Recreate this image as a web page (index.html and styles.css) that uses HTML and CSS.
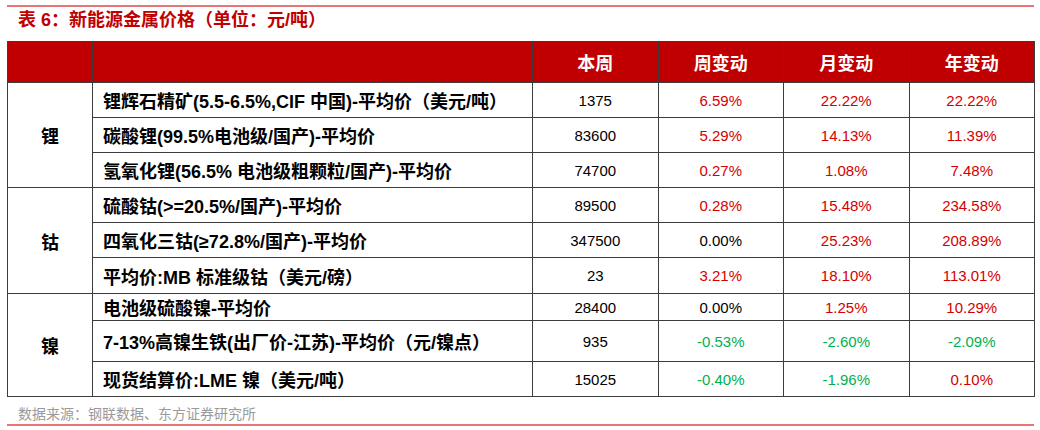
FILE: index.html
```html
<!DOCTYPE html>
<html lang="zh-CN">
<head>
<meta charset="utf-8">
<title>新能源金属价格</title>
<link rel="stylesheet" href="styles.css">
</head>
<body>
<div class="page">
  <div class="rule"></div>
  <div class="title">表 6：新能源金属价格（单位：元/吨）</div>
  <table class="tbl">
    <colgroup>
      <col class="c-metal"><col class="c-name"><col class="c-num"><col class="c-num"><col class="c-num"><col class="c-num">
    </colgroup>
    <thead>
      <tr class="h41"><th></th><th></th><th>本周</th><th>周变动</th><th>月变动</th><th>年变动</th></tr>
    </thead>
    <tbody>
      <tr class="h35"><td class="metal" rowspan="3">锂</td><td class="name">锂辉石精矿(5.5-6.5%,CIF 中国)-平均价（美元/吨）</td><td>1375</td><td class="up">6.59%</td><td class="up">22.22%</td><td class="up">22.22%</td></tr>
      <tr class="h35"><td class="name">碳酸锂(99.5%电池级/国产)-平均价</td><td>83600</td><td class="up">5.29%</td><td class="up">14.13%</td><td class="up">11.39%</td></tr>
      <tr class="h35"><td class="name">氢氧化锂(56.5% 电池级粗颗粒/国产)-平均价</td><td>74700</td><td class="up">0.27%</td><td class="up">1.08%</td><td class="up">7.48%</td></tr>
      <tr class="h35"><td class="metal" rowspan="3">钴</td><td class="name">硫酸钴(&gt;=20.5%/国产)-平均价</td><td>89500</td><td class="up">0.28%</td><td class="up">15.48%</td><td class="up">234.58%</td></tr>
      <tr class="h35"><td class="name">四氧化三钴(≥72.8%/国产)-平均价</td><td>347500</td><td>0.00%</td><td class="up">25.23%</td><td class="up">208.89%</td></tr>
      <tr class="h36"><td class="name">平均价:MB 标准级钴（美元/磅）</td><td>23</td><td class="up">3.21%</td><td class="up">18.10%</td><td class="up">113.01%</td></tr>
      <tr class="h27"><td class="metal" rowspan="3">镍</td><td class="name">电池级硫酸镍-平均价</td><td>28400</td><td>0.00%</td><td class="up">1.25%</td><td class="up">10.29%</td></tr>
      <tr class="h41"><td class="name">7-13%高镍生铁(出厂价-江苏)-平均价（元/镍点）</td><td>935</td><td class="down">-0.53%</td><td class="down">-2.60%</td><td class="down">-2.09%</td></tr>
      <tr class="h35"><td class="name">现货结算价:LME 镍（美元/吨）</td><td>15025</td><td class="down">-0.40%</td><td class="down">-1.96%</td><td class="up">0.10%</td></tr>
    </tbody>
  </table>
  <div class="source">数据来源：钢联数据、东方证券研究所</div>
  <div class="rule"></div>
</div>
</body>
</html>
```
FILE: styles.css
```css
html, body {
  margin: 0;
  padding: 0;
  background: #ffffff;
}
body {
  font-family: "Liberation Sans", "Noto Sans CJK SC", sans-serif;
  color: #000;
  text-spacing-trim: space-all;
}
.page {
  width: 1027px;
  padding: 5px 0 0 7px;
}
.rule {
  height: 2px;
  background: #e87676;
}
.title {
  margin: 1px 0 9px 11px;
  line-height: 24px;
  font-size: 18px;
  font-weight: bold;
  color: #c00000;
}
.tbl {
  width: 1027px;
  border-collapse: collapse;
  table-layout: fixed;
  border: 1px solid #7a7a7a;
}
.c-metal { width: 85px; }
.c-name { width: 440px; }
.c-num { width: 125.5px; }
.tbl th, .tbl td {
  border: 1px solid #3c3c3c;
  padding: 0;
  text-align: center;
  vertical-align: middle;
  font-size: 15px;
  white-space: nowrap;
}
.tbl th {
  background: #c00000;
  color: #fff;
  font-size: 18px;
  font-weight: bold;
}
.tbl .name {
  text-align: left;
  padding-left: 10px;
  font-size: 18px;
  font-weight: bold;
}
.tbl .metal {
  font-size: 18px;
  font-weight: bold;
}
.tbl .up { color: #d40000; }
.tbl .down { color: #00b050; }
.h41 { height: 41px; }
.h35 { height: 35px; }
.h36 { height: 36px; }
.h27 { height: 27px; }
.source {
  margin: 8px 0 0 11px;
  line-height: 19px;
  font-size: 14px;
  color: #9a9a9a;
}
```
